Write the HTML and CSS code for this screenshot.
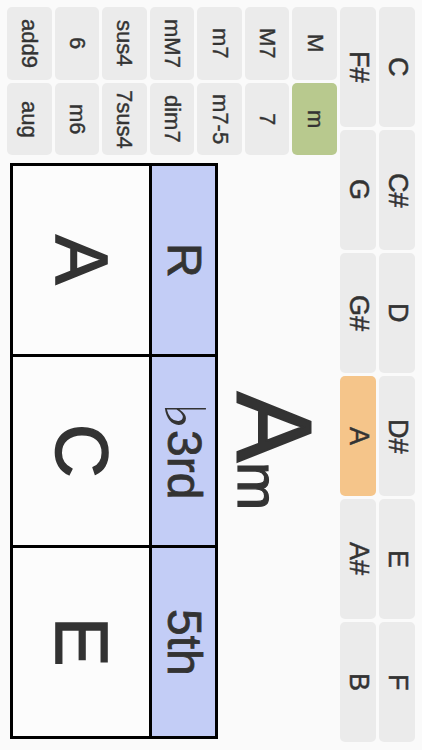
FILE: index.html
```html
<!DOCTYPE html>
<html lang="en">
<head>
<meta charset="utf-8">
<title>Chord</title>
<link rel="stylesheet" href="styles.css">
</head>
<body>
<div class="stage">
  <div class="keys">
    <div class="key">C</div>
    <div class="key">C#</div>
    <div class="key">D</div>
    <div class="key">D#</div>
    <div class="key">E</div>
    <div class="key">F</div>
  </div>
  <div class="keys second">
    <div class="key">F#</div>
    <div class="key">G</div>
    <div class="key">G#</div>
    <div class="key key-on">A</div>
    <div class="key">A#</div>
    <div class="key">B</div>
  </div>
  <div class="main">
    <div class="types">
      <div class="type">M</div>
      <div class="type type-on">m</div>
      <div class="type">M7</div>
      <div class="type">7</div>
      <div class="type">m7</div>
      <div class="type">m7-5</div>
      <div class="type">mM7</div>
      <div class="type">dim7</div>
      <div class="type">sus4</div>
      <div class="type">7sus4</div>
      <div class="type">6</div>
      <div class="type">m6</div>
      <div class="type">add9</div>
      <div class="type">aug</div>
    </div>
    <div class="display">
      <div class="chord"><span class="root">A</span><span class="qual">m</span></div>
      <div class="table">
        <div class="head">R</div>
        <div class="head"><span class="flat">♭</span>3rd</div>
        <div class="head">5th</div>
        <div class="note">A</div>
        <div class="note">C</div>
        <div class="note">E</div>
      </div>
    </div>
  </div>
</div>
</body>
</html>
```

FILE: styles.css
```css
html, body {
  margin: 0;
  padding: 0;
  width: 422px;
  height: 750px;
  overflow: hidden;
  background: #fafafa;
}

/* The app is shown in landscape, turned a quarter clockwise:
   vertical-rl writing mode makes the logical layout the landscape one. */
.stage {
  box-sizing: border-box;
  width: 422px;
  height: 750px;
  writing-mode: vertical-rl;
  text-orientation: sideways;
  padding-block: 7px 7px;
  padding-inline: 7px 8px;
  background: #fafafa;
  font-family: "Liberation Sans", Arial, sans-serif;
  color: #333;
  display: flex;
  flex-direction: column;
}

.keys {
  display: grid;
  grid-template-columns: repeat(6, 1fr);
  gap: 3px;
  block-size: 36px;
  flex: none;
}

.second {
  margin-block-start: 3px;
}

.key {
  background: #ebebeb;
  border-radius: 5px;
  display: flex;
  align-items: center;
  justify-content: center;
  font-size: 27px;
  line-height: 1;
  -webkit-text-stroke: 0.5px #333;
}

.key-on {
  background: #f5c58a;
}

.main {
  margin-block-start: 3px;
  flex: 1;
  display: flex;
}

.types {
  inline-size: 148px;
  flex: none;
  display: grid;
  grid-template-columns: 73px 72px;
  grid-template-rows: repeat(7, 1fr);
  gap: 3px;
}

.type {
  background: #ebebeb;
  border-radius: 5px;
  display: flex;
  align-items: center;
  justify-content: center;
  font-size: 22px;
  line-height: 1;
  -webkit-text-stroke: 0.4px #333;
}

.type-on {
  background: #b8c98e;
}

.display {
  flex: 1;
  margin-inline: 8px 3px;
  display: flex;
  flex-direction: column;
}

.chord {
  box-sizing: border-box;
  block-size: 119px;
  flex: none;
  padding-block-start: 7px;
  line-height: 112px;
  text-align: center;
  white-space: nowrap;
  -webkit-text-stroke: 2px #333;
}

.root {
  font-size: 105px;
}

.qual {
  font-size: 58px;
  -webkit-text-stroke: 1.2px #333;
}

.table {
  box-sizing: border-box;
  block-size: 208px;
  flex: none;
  border: 3px solid #000;
  background: #000;
  display: grid;
  grid-template-columns: repeat(3, 1fr);
  grid-template-rows: 63px 1fr;
  gap: 3px;
}

.head {
  background: #c3cdf6;
  display: flex;
  align-items: center;
  justify-content: center;
  font-size: 48px;
  line-height: 1;
  -webkit-text-stroke: 0.8px #333;
}

.flat {
  font-family: "DejaVu Sans", sans-serif;
  font-size: 56px;
  line-height: 48px;
  margin-inline-end: 1px;
  -webkit-text-stroke: 0;
}

.note {
  background: #fcfcfc;
  display: flex;
  align-items: center;
  justify-content: center;
  font-size: 74px;
  line-height: 1;
  -webkit-text-stroke: 1.6px #333;
}
```
